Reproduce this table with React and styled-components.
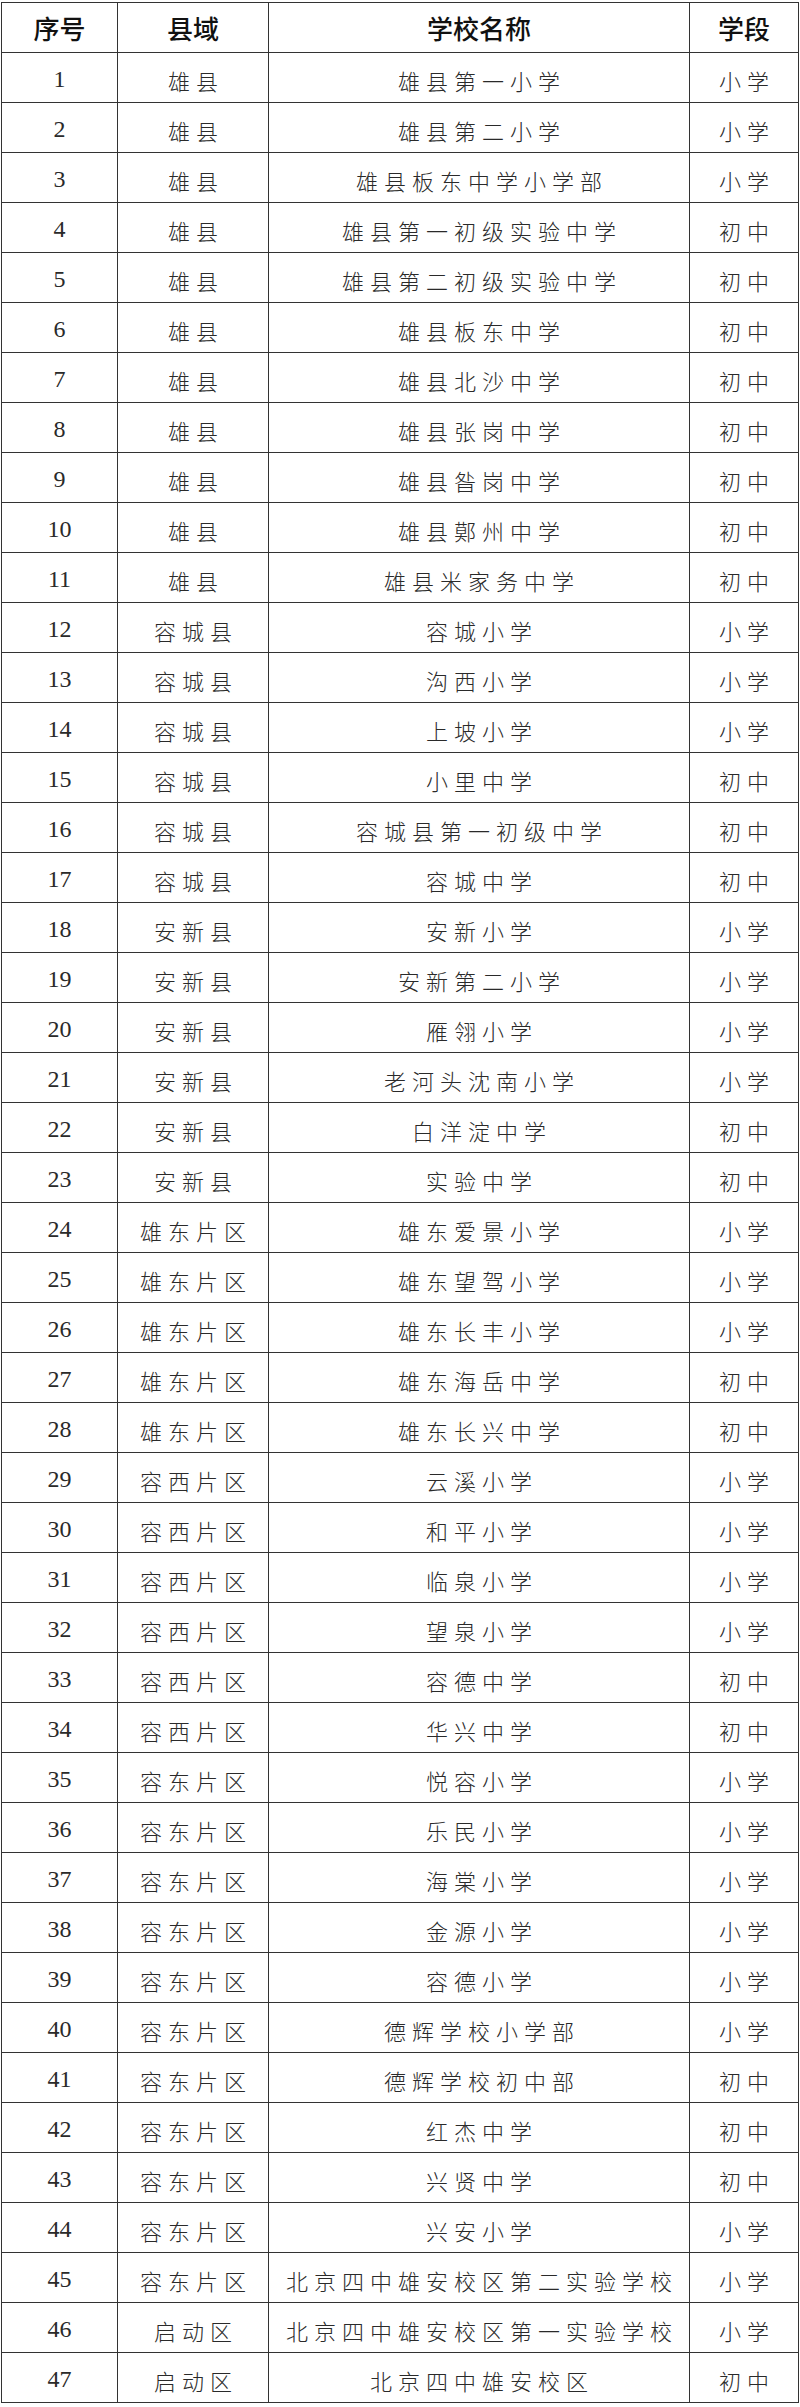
import React from 'react';
import styled, { createGlobalStyle } from 'styled-components';

const GlobalStyle = createGlobalStyle`
    html, body {
        margin: 0;
        padding: 0;
        background: #ffffff;
    }
`;

const Page = styled.div`
    width: 800px;
    padding: 2px 0 0 1px;
    box-sizing: border-box;
    background: #ffffff;
`;

const Table = styled.table`
    width: 797px;
    border-collapse: collapse;
    table-layout: fixed;
`;

const Row = styled.tr`
    height: 50px;
`;

const HeadCell = styled.th`
    padding: 0;
    border: 1.5px solid #333;
    font-family: "Noto Sans CJK SC", "Noto Sans", sans-serif;
    font-weight: 500;
    font-size: 26px;
    line-height: 30px;
    color: #111;
    text-align: center;
    vertical-align: middle;
`;

const Cell = styled.td`
    padding: ${(props) => (props.$num ? '3px 0 0 0' : '4px 0 0 6px')};
    border: 1.5px solid #333;
    font-family: ${(props) =>
        props.$num
            ? '"Liberation Serif", serif'
            : '"Noto Sans CJK SC", sans-serif'};
    font-weight: ${(props) => (props.$num ? 400 : 300)};
    font-size: ${(props) => (props.$num ? '24px' : '22px')};
    line-height: 28px;
    letter-spacing: ${(props) => (props.$num ? '0' : '6px')};
    color: #2a2a2a;
    text-align: center;
    vertical-align: middle;
    white-space: nowrap;
`;

const rows = [
    ['雄县', '雄县第一小学', '小学'],
    ['雄县', '雄县第二小学', '小学'],
    ['雄县', '雄县板东中学小学部', '小学'],
    ['雄县', '雄县第一初级实验中学', '初中'],
    ['雄县', '雄县第二初级实验中学', '初中'],
    ['雄县', '雄县板东中学', '初中'],
    ['雄县', '雄县北沙中学', '初中'],
    ['雄县', '雄县张岗中学', '初中'],
    ['雄县', '雄县昝岗中学', '初中'],
    ['雄县', '雄县鄚州中学', '初中'],
    ['雄县', '雄县米家务中学', '初中'],
    ['容城县', '容城小学', '小学'],
    ['容城县', '沟西小学', '小学'],
    ['容城县', '上坡小学', '小学'],
    ['容城县', '小里中学', '初中'],
    ['容城县', '容城县第一初级中学', '初中'],
    ['容城县', '容城中学', '初中'],
    ['安新县', '安新小学', '小学'],
    ['安新县', '安新第二小学', '小学'],
    ['安新县', '雁翎小学', '小学'],
    ['安新县', '老河头沈南小学', '小学'],
    ['安新县', '白洋淀中学', '初中'],
    ['安新县', '实验中学', '初中'],
    ['雄东片区', '雄东爱景小学', '小学'],
    ['雄东片区', '雄东望驾小学', '小学'],
    ['雄东片区', '雄东长丰小学', '小学'],
    ['雄东片区', '雄东海岳中学', '初中'],
    ['雄东片区', '雄东长兴中学', '初中'],
    ['容西片区', '云溪小学', '小学'],
    ['容西片区', '和平小学', '小学'],
    ['容西片区', '临泉小学', '小学'],
    ['容西片区', '望泉小学', '小学'],
    ['容西片区', '容德中学', '初中'],
    ['容西片区', '华兴中学', '初中'],
    ['容东片区', '悦容小学', '小学'],
    ['容东片区', '乐民小学', '小学'],
    ['容东片区', '海棠小学', '小学'],
    ['容东片区', '金源小学', '小学'],
    ['容东片区', '容德小学', '小学'],
    ['容东片区', '德辉学校小学部', '小学'],
    ['容东片区', '德辉学校初中部', '初中'],
    ['容东片区', '红杰中学', '初中'],
    ['容东片区', '兴贤中学', '初中'],
    ['容东片区', '兴安小学', '小学'],
    ['容东片区', '北京四中雄安校区第二实验学校', '小学'],
    ['启动区', '北京四中雄安校区第一实验学校', '小学'],
    ['启动区', '北京四中雄安校区', '初中'],
];

export default function App() {
    return (
        <Page>
            <GlobalStyle />
            <Table>
                <colgroup>
                    <col style={{ width: '116px' }} />
                    <col style={{ width: '151px' }} />
                    <col style={{ width: '421px' }} />
                    <col style={{ width: '109px' }} />
                </colgroup>
                <thead>
                    <Row>
                        <HeadCell>序号</HeadCell>
                        <HeadCell>县域</HeadCell>
                        <HeadCell>学校名称</HeadCell>
                        <HeadCell>学段</HeadCell>
                    </Row>
                </thead>
                <tbody>
                    {rows.map(([county, school, stage], i) => (
                        <Row key={i}>
                            <Cell $num>{i + 1}</Cell>
                            <Cell>{county}</Cell>
                            <Cell>{school}</Cell>
                            <Cell>{stage}</Cell>
                        </Row>
                    ))}
                </tbody>
            </Table>
        </Page>
    );
}
